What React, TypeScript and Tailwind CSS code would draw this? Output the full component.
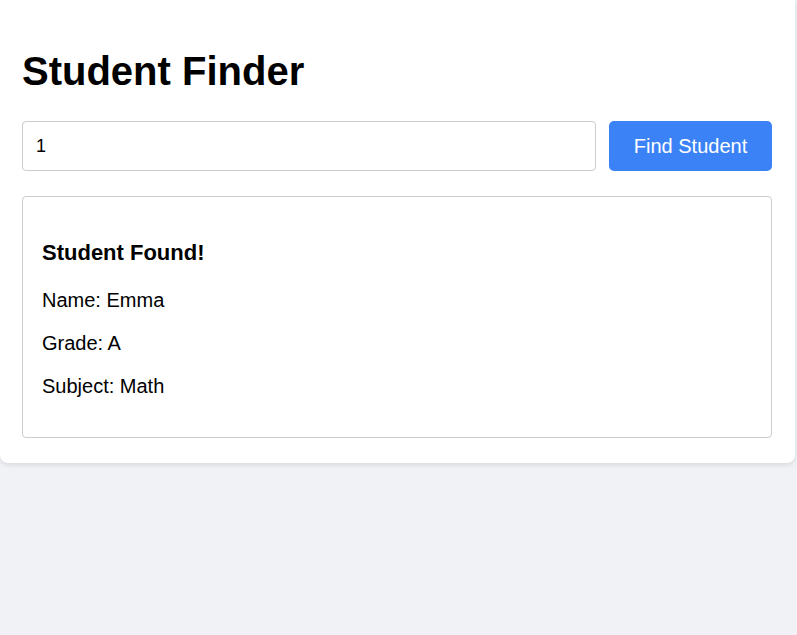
import { useState } from "react";

const students: Record<string, { name: string; grade: string; subject: string }> = {
  "1": { name: "Emma", grade: "A", subject: "Math" },
  "2": { name: "Liam", grade: "B", subject: "Science" },
  "3": { name: "Olivia", grade: "A", subject: "History" },
};

export default function App() {
  const [query, setQuery] = useState("1");
  const [found, setFound] = useState(students["1"]);

  return (
    <div className="min-h-[635px] bg-[#f0f2f5] font-['Liberation_Sans',Arial,sans-serif] text-black">
      <div className="w-[795px] rounded-b-lg bg-white pl-[22px] pr-[23px] pt-[48px] pb-[25px] shadow-[0_2px_5px_rgba(0,0,0,0.1)]">
        <h1 className="text-[40px] font-bold leading-[46px]">Student Finder</h1>

        <div className="mt-[27px] flex gap-[13px]">
          <input
            value={query}
            onChange={(e) => setQuery(e.target.value)}
            className="h-[50px] flex-1 rounded border border-[#cccccc] px-[13px] text-[18px] outline-none"
          />
          <button
            onClick={() => setFound(students[query.trim()])}
            className="h-[50px] w-[163px] rounded-[5px] bg-[#3b82f6] text-[20px] text-white"
          >
            Find Student
          </button>
        </div>

        {found && (
          <div className="mt-[25px] flex flex-col rounded border border-[#cccccc] px-[19px] pt-[43px] pb-[39px]">
            <h3 className="text-[22px] font-bold leading-[25px]">Student Found!</h3>
            <div className="mt-[24px] flex flex-col gap-[20px] text-[20px] leading-[23px]">
              <p>Name: {found.name}</p>
              <p>Grade: {found.grade}</p>
              <p>Subject: {found.subject}</p>
            </div>
          </div>
        )}
      </div>
    </div>
  );
}
